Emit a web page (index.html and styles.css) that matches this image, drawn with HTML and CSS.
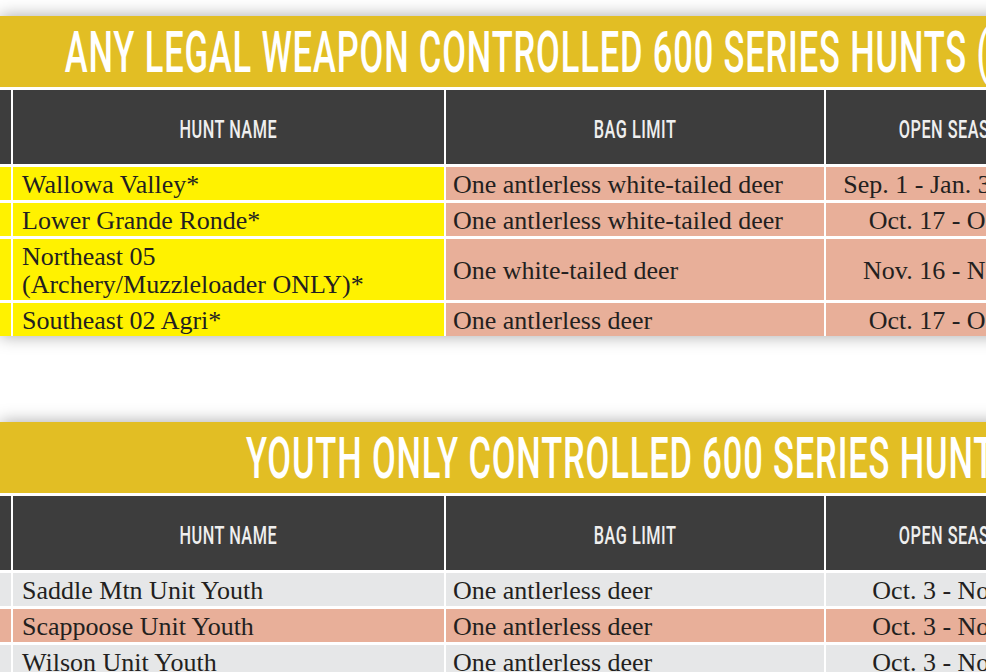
FILE: index.html
```html
<!DOCTYPE html>
<html lang="en">
<head>
<meta charset="utf-8">
<title>Controlled 600 Series Hunts</title>
<link rel="stylesheet" href="styles.css">
</head>
<body>
<main class="page">
  <section class="card">
    <div class="banner"><span class="title t1">ANY LEGAL WEAPON CONTROLLED 600 SERIES HUNTS (WHITE-TAIL)</span></div>

    <div class="hcell"></div>
    <div class="hcell"><span class="hlabel">HUNT NAME</span></div>
    <div class="hcell"><span class="hlabel">BAG LIMIT</span></div>
    <div class="hcell"><span class="hlabel">OPEN SEASON</span></div>
    <div class="hcell"><span class="hlabel">HUNT NUMBER</span></div>

    <div class="cell yellow"></div>
    <div class="cell yellow name">Wallowa Valley*</div>
    <div class="cell salmon bag">One antlerless white-tailed deer</div>
    <div class="cell salmon date">Sep. 1 - Jan. 31, 2021</div>
    <div class="cell salmon date">660A</div>

    <div class="cell yellow"></div>
    <div class="cell yellow name">Lower Grande Ronde*</div>
    <div class="cell salmon bag">One antlerless white-tailed deer</div>
    <div class="cell salmon date">Oct. 17 - Oct. 31</div>
    <div class="cell salmon date">660B</div>

    <div class="cell yellow"></div>
    <div class="cell yellow name">Northeast 05<br>(Archery/Muzzleloader ONLY)*</div>
    <div class="cell salmon bag">One white-tailed deer</div>
    <div class="cell salmon date">Nov. 16 - Nov. 30</div>
    <div class="cell salmon date">661</div>

    <div class="cell yellow"></div>
    <div class="cell yellow name">Southeast 02 Agri*</div>
    <div class="cell salmon bag">One antlerless deer</div>
    <div class="cell salmon date">Oct. 17 - Oct. 31</div>
    <div class="cell salmon date">662</div>
  </section>

  <section class="card card2">
    <div class="banner"><span class="title t2">YOUTH ONLY CONTROLLED 600 SERIES HUNTS</span></div>

    <div class="hcell"></div>
    <div class="hcell"><span class="hlabel">HUNT NAME</span></div>
    <div class="hcell"><span class="hlabel">BAG LIMIT</span></div>
    <div class="hcell"><span class="hlabel">OPEN SEASON</span></div>
    <div class="hcell"><span class="hlabel">HUNT NUMBER</span></div>

    <div class="cell gray"></div>
    <div class="cell gray name">Saddle Mtn Unit Youth</div>
    <div class="cell gray bag">One antlerless deer</div>
    <div class="cell gray date">Oct. 3 - Nov. 15</div>
    <div class="cell gray date">615T</div>

    <div class="cell salmon"></div>
    <div class="cell salmon name">Scappoose Unit Youth</div>
    <div class="cell salmon bag">One antlerless deer</div>
    <div class="cell salmon date">Oct. 3 - Nov. 15</div>
    <div class="cell salmon date">615U</div>

    <div class="cell gray"></div>
    <div class="cell gray name">Wilson Unit Youth</div>
    <div class="cell gray bag">One antlerless deer</div>
    <div class="cell gray date">Oct. 3 - Nov. 15</div>
    <div class="cell gray date">615V</div>
  </section>
</main>
</body>
</html>
```

FILE: styles.css
```css
html, body {
  margin: 0;
  padding: 0;
  background: #ffffff;
  overflow: hidden;
}

.page {
  padding-top: 16px;
  width: 1262px;
}

.card {
  display: grid;
  grid-template-columns: 11px 431px 378px 260px 174px;
  column-gap: 2px;
  row-gap: 3px;
  width: 1262px;
  background: #ffffff;
  box-shadow: 0 0 16px rgba(0, 0, 0, 0.35);
}

.card2 {
  margin-top: 86px;
}

.banner {
  grid-column: 1 / -1;
  display: flex;
  justify-content: center;
  background: #e2be24;
  padding-top: 3px;
  height: 68px;
  line-height: 68px;
}

.title {
  display: inline-block;
  white-space: nowrap;
  font-family: Roboto, "Liberation Sans", sans-serif;
  font-weight: 500;
  font-size: 57.5px;
  letter-spacing: 1.4px;
  color: #ffffff;
  transform: scaleX(0.6);
  transform-origin: center;
}

.hcell {
  background: #3d3d3d;
  display: flex;
  justify-content: center;
  padding-top: 3px;
  height: 71px;
  line-height: 71px;
}

.hlabel {
  display: inline-block;
  white-space: nowrap;
  font-family: Roboto, "Liberation Sans", sans-serif;
  font-weight: 500;
  font-size: 26.5px;
  letter-spacing: 0.8px;
  color: #efefef;
  transform: scaleX(0.615);
  transform-origin: center;
}

.cell {
  display: flex;
  align-items: center;
  font-family: "Liberation Serif", "Times New Roman", serif;
  font-size: 26px;
  line-height: 28px;
  color: #231f20;
  padding: 4px 0 1px 0;
  white-space: nowrap;
}

.name {
  padding-left: 9px;
}

.bag {
  padding-left: 7px;
}

.date {
  justify-content: center;
}

.yellow {
  background: #fff200;
}

.salmon {
  background: #e8af99;
}

.gray {
  background: #e6e7e8;
}
```
